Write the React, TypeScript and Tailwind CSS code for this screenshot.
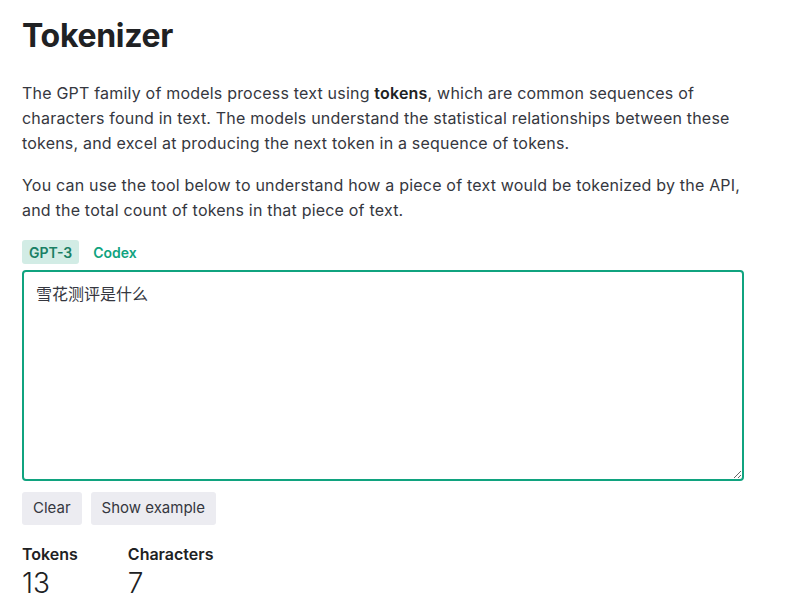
import { useState } from 'react';

const font = { fontFamily: 'Inter, "Noto Sans CJK SC", sans-serif' };

export default function App() {
  const [model, setModel] = useState<'gpt3' | 'codex'>('gpt3');
  const [text, setText] = useState('雪花测评是什么');

  return (
    <div className="min-h-screen bg-white text-[#353740]" style={font}>
      <div className="px-[22px] pt-[16px] w-[764px]">
        <h1 className="text-[32px] leading-[40px] font-bold text-[#202123] tracking-[-0.3px]">Tokenizer</h1>

        <p className="mt-[25px] text-[16px] leading-[25px] tracking-[0.2px]">
          The GPT family of models process text using <b className="font-semibold text-[#202123]">tokens</b>, which are common sequences of
          characters found in text. The models understand the statistical relationships between these
          tokens, and excel at producing the next token in a sequence of tokens.
        </p>
        <p className="mt-[17px] text-[16px] leading-[25px] tracking-[0.2px]">
          You can use the tool below to understand how a piece of text would be tokenized by the API,
          and the total count of tokens in that piece of text.
        </p>

        {/* Model switch */}
        <div className="mt-[17px] flex gap-[6px]">
          <button
            onClick={() => setModel('gpt3')}
            className={`h-[24px] px-[7px] rounded-[3px] text-[14px] font-semibold ${model === 'gpt3' ? 'bg-[#d2ece5] text-[#1a7f64]' : 'text-[#10a37f]'}`}
          >
            GPT-3
          </button>
          <button
            onClick={() => setModel('codex')}
            className={`h-[24px] px-[8px] rounded-[3px] text-[14px] font-semibold ${model === 'codex' ? 'bg-[#d2ece5] text-[#1a7f64]' : 'text-[#10a37f]'}`}
          >
            Codex
          </button>
        </div>

        <textarea
          className="mt-[6px] block w-[722px] h-[211px] border-2 border-[#10a37f] rounded-[4px] px-[12px] py-[10px] text-[16px] leading-[24px] text-[#353740] outline-none resize-y"
          style={font}
          value={text}
          onChange={e => setText(e.target.value)}
        />

        <div className="mt-[11px] flex gap-[9px]">
          <button onClick={() => setText('')} className="h-[33px] px-[11px] rounded-[3px] bg-[#ececf1] text-[15px] text-[#353740]">
            Clear
          </button>
          <button className="h-[33px] px-[11px] rounded-[3px] bg-[#ececf1] text-[15px] text-[#353740]">
            Show example
          </button>
        </div>

        <div className="mt-[18px] flex gap-[50px]">
          <div>
            <div className="text-[16px] leading-[22px] font-semibold text-[#202123]">Tokens</div>
            <div className="text-[28px] leading-[36px] font-light text-[#202123]">13</div>
          </div>
          <div>
            <div className="text-[16px] leading-[22px] font-semibold text-[#202123]">Characters</div>
            <div className="text-[28px] leading-[36px] font-light text-[#202123]">{[...text].length}</div>
          </div>
        </div>
      </div>
    </div>
  );
}
